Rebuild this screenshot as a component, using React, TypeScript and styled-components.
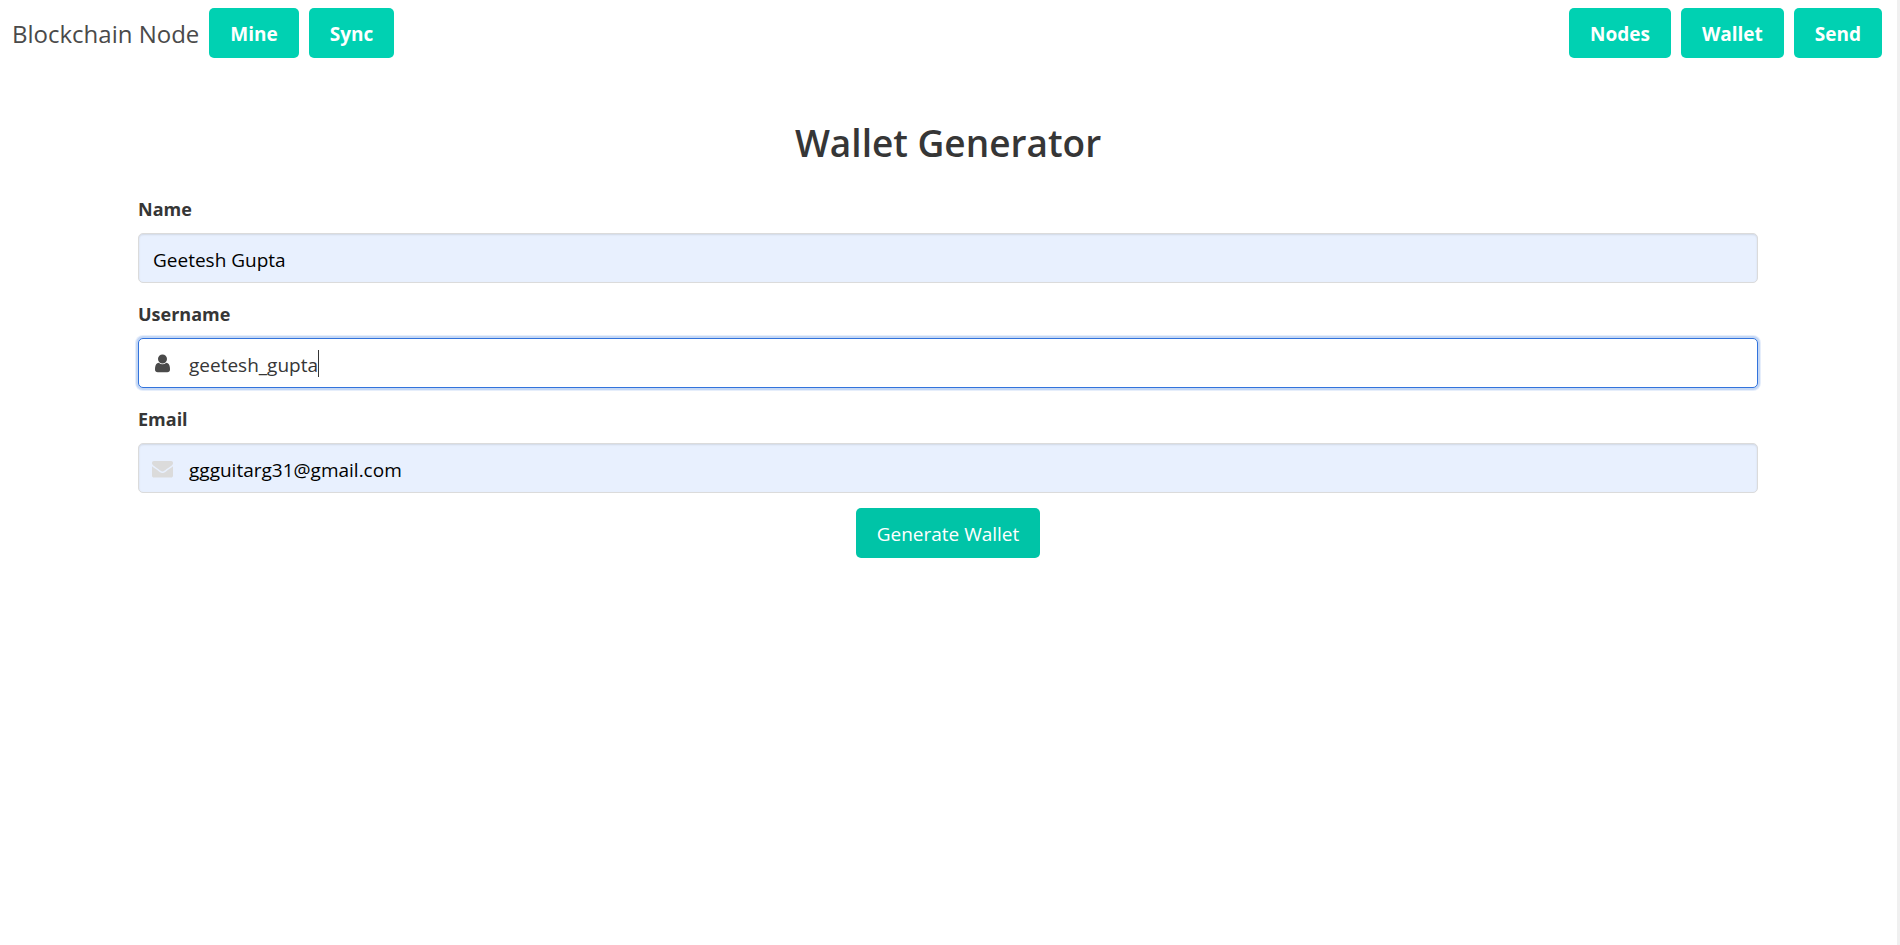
import React from "react";
import styled, { createGlobalStyle, css } from "styled-components";

const GlobalStyle = createGlobalStyle`
  *, *::before, *::after { box-sizing: border-box; }
  body {
    margin: 0;
    background: #fff;
    color: #4a4a4a;
    font-family: "Open Sans", "Noto Sans", sans-serif;
    font-size: 19px;
    line-height: 30px;
  }
`;

const Page = styled.div`
  min-height: 100vh;
  border-right: 3px solid #f0f0f0;
`;

const Navbar = styled.nav`
  display: flex;
  align-items: center;
  justify-content: space-between;
  padding: 8px 15px 8px 12px;
`;

const NavGroup = styled.div`
  display: flex;
  align-items: center;
  gap: 10px;
`;

const Brand = styled.span`
  padding-top: 2px;
  font-size: 24px;
`;

const Button = styled.button<{ $active?: boolean }>`
  height: 50px;
  padding: 2px 21px 0;
  border: 0;
  border-radius: 5px;
  background: ${({ $active }) => ($active ? "#00c4a7" : "#00d1b2")};
  color: #fff;
  font: inherit;
  font-weight: ${({ $active }) => ($active ? 400 : 700)};
  white-space: nowrap;
  cursor: pointer;
`;

const Main = styled.main`
  padding: 48px 139px 0 138px;
`;

const Title = styled.h1`
  margin: 0 0 21px;
  color: #363636;
  font-size: 37px;
  font-weight: 600;
  line-height: 58px;
  text-align: center;
`;

const Form = styled.form`
  display: flex;
  flex-direction: column;
  gap: 15px;
`;

const Field = styled.div`
  display: flex;
  flex-direction: column;
  gap: 10px;
`;

const Label = styled.label`
  padding-top: 2px;
  color: #363636;
  font-size: 18px;
  font-weight: 700;
  line-height: 28px;
`;

const Control = styled.div`
  position: relative;
`;

const Input = styled.input<{ $filled?: boolean; $icon?: boolean }>`
  display: block;
  width: 100%;
  height: 50px;
  padding: 4px 14px 0 ${({ $icon }) => ($icon ? 50 : 14)}px;
  border: 1px solid #dbdbdb;
  border-radius: 5px;
  outline: none;
  background: ${({ $filled }) => ($filled ? "#e8f0fe" : "#fff")};
  box-shadow: inset 0 1px 2px rgba(10, 10, 10, 0.1);
  color: ${({ $filled }) => ($filled ? "#000" : "#363636")};
  font: inherit;
  ${({ $filled }) =>
    !$filled &&
    css`
      border-color: #3273dc;
      box-shadow: 0 0 0 2px rgba(50, 115, 220, 0.18), 0 0 0 3px rgba(50, 115, 220, 0.12);
      caret-color: transparent;
    `}
`;

const FieldIcon = styled.svg<{ $active?: boolean }>`
  position: absolute;
  top: 15px;
  left: 14px;
  width: 21px;
  height: 21px;
  fill: ${({ $active }) => ($active ? "#4a4a4a" : "#dbdbdb")};
  pointer-events: none;
`;

const Caret = styled.span`
  position: absolute;
  top: 12px;
  left: 180px;
  width: 1px;
  height: 27px;
  background: #363636;
`;

const Actions = styled.div`
  display: flex;
  justify-content: center;
`;

export default function App() {
  return (
    <>
      <GlobalStyle />
      <Page>
        <Navbar>
          <NavGroup>
            <Brand>Blockchain Node</Brand>
            <Button type="button">Mine</Button>
            <Button type="button">Sync</Button>
          </NavGroup>
          <NavGroup>
            <Button type="button">Nodes</Button>
            <Button type="button">Wallet</Button>
            <Button type="button">Send</Button>
          </NavGroup>
        </Navbar>
        <Main>
          <Title>Wallet Generator</Title>
          <Form onSubmit={(e) => e.preventDefault()}>
            <Field>
              <Label htmlFor="name">Name</Label>
              <Control>
                <Input id="name" type="text" defaultValue="Geetesh Gupta" $filled />
              </Control>
            </Field>
            <Field>
              <Label htmlFor="username">Username</Label>
              <Control>
                <Input id="username" type="text" defaultValue="geetesh_gupta" spellCheck={false} $icon />
                <FieldIcon viewBox="0 0 1792 1792" aria-hidden="true" $active>
                  <path d="M1536 1399q0 109-62.500 172.500t-166.500 63.500h-822q-104 0-166.500-63.500t-62.500-172.500q0-85 8.500-160.500t31.500-152 58.500-131 94-89 134.500-34.500q131 128 313 128t313-128q76 0 134.500 34.500t94 89 58.500 131 31.500 152 8.500 160.500zm-256-887q0 159-112.500 271.500t-271.500 112.500-271.500-112.500-112.500-271.500 112.500-271.500 271.500-112.500 271.500 112.500 112.500 271.500z" />
                </FieldIcon>
                <Caret />
              </Control>
            </Field>
            <Field>
              <Label htmlFor="email">Email</Label>
              <Control>
                <Input id="email" type="email" defaultValue="ggguitarg31@gmail.com" $filled $icon />
                <FieldIcon viewBox="0 0 1792 1792" aria-hidden="true">
                  <path d="M1792 710v794q0 66-47 113t-113 47h-1472q-66 0-113-47t-47-113v-794q44 49 101 87 362 246 497 345 57 42 92.500 65.500t94.500 48 110 24.500h2q51 0 110-24.500t94.500-48 92.500-65.500q170-123 498-345 57-39 100-87zm0-294q0 79-49 151t-122 123q-376 261-468 325-10 7-42.500 31t-54 38.500-52 32.500-57.500 27-50 9h-2q-23 0-50-9t-57.500-27-52-32.500-54-38.500-42.500-31q-91-64-262-182.500t-205-142.500q-62-42-117-115.500t-55-136.500q0-78 41.500-130t118.500-52h1472q65 0 112.500 47t47.500 113z" />
                </FieldIcon>
              </Control>
            </Field>
            <Actions>
              <Button type="submit" $active>
                Generate Wallet
              </Button>
            </Actions>
          </Form>
        </Main>
      </Page>
    </>
  );
}
